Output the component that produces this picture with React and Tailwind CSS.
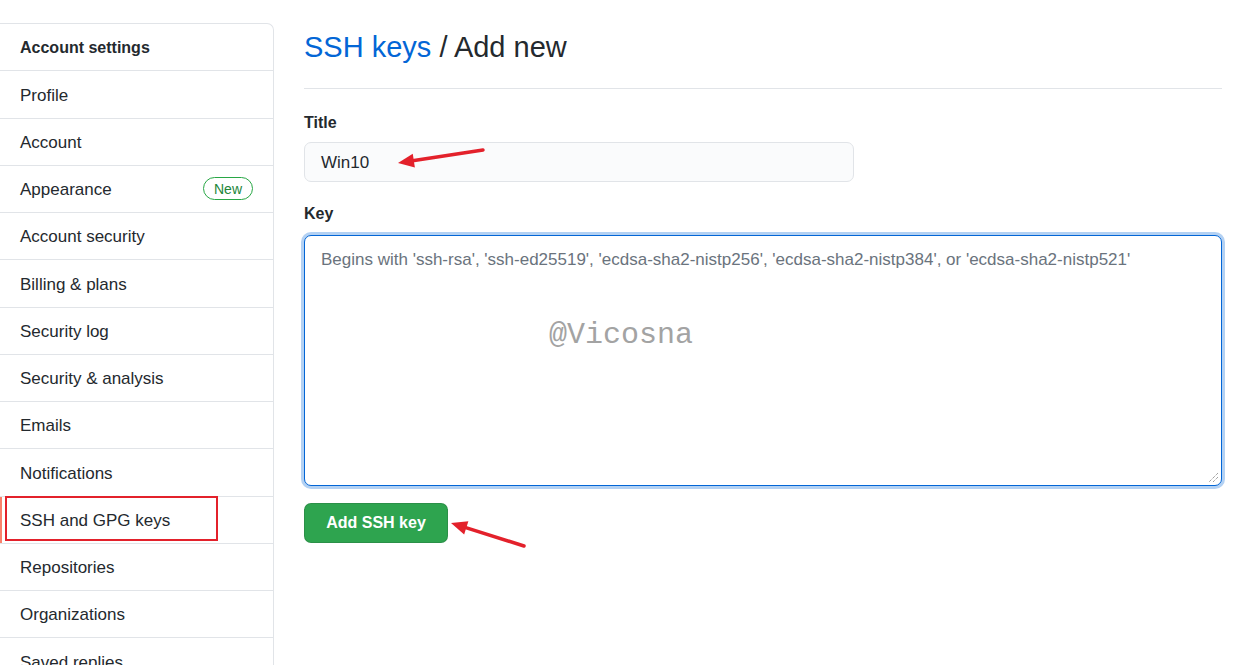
import React from "react"

const items = [
  "Profile",
  "Account",
  "Appearance",
  "Account security",
  "Billing & plans",
  "Security log",
  "Security & analysis",
  "Emails",
  "Notifications",
  "SSH and GPG keys",
  "Repositories",
  "Organizations",
  "Saved replies",
]

const Sidebar = () => (
  <nav className="w-[274px] shrink-0 border-t border-r border-[#e1e4e8] rounded-tr-[7px] bg-white">
    <div className="h-[47.25px] flex items-center px-5 pt-[2px] border-b border-[#e1e4e8] font-bold text-[16px] text-[#24292e]">
      Account settings
    </div>
    {items.map((item) => (
      <div
        key={item}
        className="relative h-[47.25px] flex items-center justify-between pl-5 pr-5 pt-[2px] border-b border-[#e1e4e8] text-[17px] text-[#24292e]"
      >
        {item === "SSH and GPG keys" && (
          <>
            <span className="absolute left-0 top-0 bottom-0 w-[2px] bg-[#f9826c]" />
            <span className="absolute left-[5px] -top-[1px] w-[213px] h-[45px] border-2 border-[#e3212b]" />
          </>
        )}
        <span>{item}</span>
        {item === "Appearance" && (
          <span className="border border-[#28a745] text-[#22863a] rounded-full px-[10px] h-[23px] -mt-[2px] flex items-center text-[14px] leading-none">
            New
          </span>
        )}
      </div>
    ))}
  </nav>
)

const Arrow = ({ x1, y1, x2, y2 }) => {
  const dx = x2 - x1
  const dy = y2 - y1
  const len = Math.sqrt(dx * dx + dy * dy)
  const ux = dx / len
  const uy = dy / len
  const hl = 16
  const hw = 7
  const bx = x2 - ux * hl
  const by = y2 - uy * hl
  const p1 = `${bx - uy * hw},${by + ux * hw}`
  const p2 = `${bx + uy * hw},${by - ux * hw}`
  return (
    <g>
      <line x1={x1} y1={y1} x2={bx + ux * 3} y2={by + uy * 3} stroke="#e3212b" strokeWidth="3.5" strokeLinecap="round" />
      <polygon points={`${x2},${y2} ${p1} ${p2}`} fill="#e3212b" />
    </g>
  )
}

export default function App() {
  return (
    <div className="relative w-[1242px] h-[665px] overflow-hidden bg-white font-['Liberation_Sans',Arial,sans-serif]">
      <div className="flex pt-[23px]">
        <Sidebar />
        <main className="flex-1 ml-[30px] mr-[20px]">
          <div className="pt-[6px] pb-[23px] border-b border-[#e1e4e8]">
            <h1 className="text-[29px] leading-[36px] text-[#24292e]">
              <span className="text-[#0366d6]">SSH keys</span> / Add new
            </h1>
          </div>
          <div className="mt-[22px] font-bold text-[16px] leading-[24px] text-[#24292e]">Title</div>
          <div className="mt-[7px] w-[550px] h-[40px] rounded-[7px] border border-[#e1e4e8] bg-[#fafbfc] flex items-center px-4 pt-[2px] text-[17px] text-[#24292e]">
            Win10
          </div>
          <div className="mt-[20px] font-bold text-[16px] leading-[24px] text-[#24292e]">Key</div>
          <div className="relative mt-[9px] h-[251px] rounded-[7px] border border-[#0366d6] bg-white shadow-[0_0_0_3px_rgba(3,102,214,0.3)] px-4 pt-[12px] text-[17px] leading-[24px] text-[#6a737d]">
            <span>
              Begins with 'ssh-rsa', 'ssh-ed25519', 'ecdsa-sha2-nistp256', 'ecdsa-sha2-nistp384', or 'ecdsa-sha2-nistp521'
            </span>
            <div className="absolute left-[244px] top-[84px] font-['Liberation_Mono',monospace] text-[30px] leading-none text-[#a3a3a3]">
              @Vicosna
            </div>
            <svg className="absolute right-[2px] bottom-[2px]" width="12" height="12" viewBox="0 0 12 12">
              <line x1="11" y1="2" x2="2" y2="11" stroke="#777" strokeWidth="1" strokeDasharray="1 1" />
              <line x1="11" y1="6" x2="6" y2="11" stroke="#777" strokeWidth="1" strokeDasharray="1 1" />
            </svg>
          </div>
          <button className="mt-[17px] w-[144px] h-[40px] rounded-[7px] bg-[#2ea44f] border border-[rgba(27,31,35,0.15)] text-white font-bold text-[16px]">
            Add SSH key
          </button>
        </main>
      </div>
      <svg className="absolute inset-0 pointer-events-none" width="1242" height="665">
        <Arrow x1={483} y1={150} x2={398} y2={163} />
        <Arrow x1={524} y1={546} x2={451} y2={523} />
      </svg>
    </div>
  )
}
